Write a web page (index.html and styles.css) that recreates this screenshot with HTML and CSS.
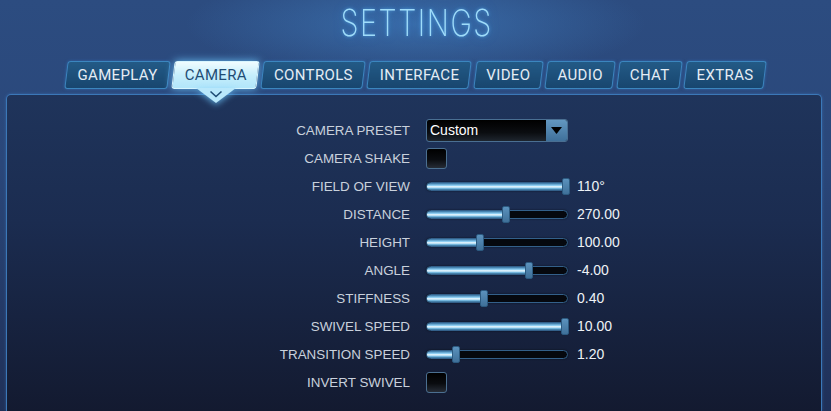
FILE: index.html
```html
<!DOCTYPE html>
<html>
<head>
<meta charset="utf-8">
<link rel="stylesheet" href="styles.css">
</head>
<body>
<div class="screen">
  <header class="head">
    <h1 class="title">SETTINGS</h1>
  </header>
  <nav class="tabs">
    <div class="tab"><span>GAMEPLAY</span></div>
    <div class="tab active"><span>CAMERA</span>
      <div class="pointer">
        <svg width="40" height="16" viewBox="0 0 40 16"><path d="M0 0 H40 L20 15 Z" fill="#b9e8fb"/><path d="M14.5 3.5 L20 8.5 L25.5 3.5" fill="none" stroke="#1f4c74" stroke-width="1.6"/></svg>
      </div>
    </div>
    <div class="tab"><span>CONTROLS</span></div>
    <div class="tab"><span>INTERFACE</span></div>
    <div class="tab"><span>VIDEO</span></div>
    <div class="tab"><span>AUDIO</span></div>
    <div class="tab"><span>CHAT</span></div>
    <div class="tab"><span>EXTRAS</span></div>
  </nav>
  <main class="panel">
    <div class="rows">
      <div class="row"><div class="label">CAMERA PRESET</div>
        <div class="select"><span class="sel-text">Custom</span><span class="sel-btn"><svg width="11" height="7" viewBox="0 0 11 7"><path d="M0 0 H11 L5.5 7 Z" fill="#000"/></svg></span></div>
      </div>
      <div class="row"><div class="label">CAMERA SHAKE</div><div class="check"></div></div>
      <div class="row"><div class="label">FIELD OF VIEW</div><div class="slider" style="--v:99%"><div class="fill"></div><div class="thumb"></div></div><div class="value">110°</div></div>
      <div class="row"><div class="label">DISTANCE</div><div class="slider" style="--v:56.5%"><div class="fill"></div><div class="thumb"></div></div><div class="value">270.00</div></div>
      <div class="row"><div class="label">HEIGHT</div><div class="slider" style="--v:37.5%"><div class="fill"></div><div class="thumb"></div></div><div class="value">100.00</div></div>
      <div class="row"><div class="label">ANGLE</div><div class="slider" style="--v:72.5%"><div class="fill"></div><div class="thumb"></div></div><div class="value">-4.00</div></div>
      <div class="row"><div class="label">STIFFNESS</div><div class="slider" style="--v:40.5%"><div class="fill"></div><div class="thumb"></div></div><div class="value">0.40</div></div>
      <div class="row"><div class="label">SWIVEL SPEED</div><div class="slider" style="--v:98.5%"><div class="fill"></div><div class="thumb"></div></div><div class="value">10.00</div></div>
      <div class="row"><div class="label">TRANSITION SPEED</div><div class="slider" style="--v:20.5%"><div class="fill"></div><div class="thumb"></div></div><div class="value">1.20</div></div>
      <div class="row"><div class="label">INVERT SWIVEL</div><div class="check"></div></div>
    </div>
  </main>
</div>
</body>
</html>
```
FILE: styles.css
```css
* { box-sizing: border-box; }
html, body { margin: 0; padding: 0; }
body {
  width: 831px; height: 411px; overflow: hidden;
  font-family: "Liberation Sans", Arial, sans-serif;
  background:
    radial-gradient(ellipse 230px 55px at 50% 24px, rgba(70,140,210,0.5), rgba(70,140,210,0) 100%),
    linear-gradient(to bottom, #2c4c80 0%, #2a477a 40%, #1f3058 100%);
}
.screen { display: flex; flex-direction: column; height: 411px; }
.head { height: 61px; display: flex; justify-content: center; }
.title {
  margin: 4px 0 0 3px; font-family: Inter, "DejaVu Sans", sans-serif; font-weight: 200;
  font-size: 37px; line-height: 37px; letter-spacing: 2px; color: #9fdcfa;
  transform: scaleX(0.78);
  text-shadow: 0 0 4px rgba(90,190,255,0.7), 0 0 12px rgba(60,150,240,0.4);
}
.tabs { display: flex; justify-content: center; gap: 4px; height: 28px; position: relative; z-index: 2; }
.tab {
  position: relative; height: 28px; padding: 0 11.5px;
  display: flex; align-items: center; justify-content: center;
  font-family: Roboto, "Liberation Sans", sans-serif; font-size: 15px; letter-spacing: 0.35px; color: #e4ecf4;
}
.tab::before {
  content: ""; position: absolute; inset: 0; transform: skewX(-7deg);
  background: linear-gradient(to bottom, #235a86, #18466f);
  border: 1px solid #3b86bf; border-radius: 3px;
  box-shadow: 0 0 3px rgba(60,140,220,0.5);
}
.tab span { position: relative; }
.tab.active { color: #1f4c74; }
.tab.active::before {
  background: linear-gradient(to bottom, #f0fcff, #c6eefc 50%, #b2e6fa);
  border-color: #d8f6ff;
  box-shadow: 0 0 8px rgba(110,200,255,0.9);
}
.pointer { position: absolute; left: 50%; top: 27px; margin-left: -20px; width: 40px; height: 16px; filter: drop-shadow(0 2px 3px rgba(110,200,255,0.7)); }
.pointer svg { display: block; }
.panel {
  margin: 5px 9px 0 6px; flex: 1;
  border: 1px solid #3b78b8; border-bottom: none; border-radius: 5px 5px 0 0;
  background: linear-gradient(to bottom, #1f345b 0%, #1b2c50 40%, #131a30 100%);
  box-shadow: 0 0 3px rgba(80,150,230,0.4);
}
.rows { padding-top: 21px; display: flex; flex-direction: column; }
.row { height: 28px; display: flex; align-items: center; }
.label {
  width: 403px; text-align: right; font-size: 13.4px; color: #c9d1dc;
  margin-right: 16px;
}
.select {
  width: 142px; height: 23px; display: flex; border: 1px solid #4a6f92; border-radius: 3px;
  background: linear-gradient(to bottom, #000 0%, #0b0d11 60%, #1e252e 100%); overflow: hidden;
}
.sel-text { flex: 1; color: #fff; font-size: 14px; line-height: 21px; padding-left: 3px; }
.sel-btn {
  width: 21px; display: flex; align-items: center; justify-content: center;
  background: linear-gradient(to bottom, #6397c0, #3f709a);
}
.sel-btn svg { display: block; margin-top: 1px; }
.check {
  width: 21px; height: 21px; border: 1px solid #4b6f90; border-radius: 3px;
  background: linear-gradient(to bottom, #000 0%, #0a0c10 55%, #262c36 100%);
}
.slider {
  position: relative; width: 142px; height: 9px; border-radius: 5px;
  background: #05080e; border: 1px solid #33608a;
  box-shadow: 0 0 2px rgba(0,0,0,0.6);
}
.fill {
  position: absolute; left: 0; top: 0; bottom: 0; width: var(--v); border-radius: 4px;
  background: linear-gradient(to bottom, #3471a0 0%, #8ccdf2 35%, #f2fbff 55%, #7fc2e8 75%, #2f6893 100%);
}
.thumb {
  position: absolute; top: -5px; left: var(--v); margin-left: -4px; width: 8px; height: 17px;
  border-radius: 2px; background: linear-gradient(to bottom, #5b92bd, #3f7099);
  border: 1px solid #2c5a80;
}
.value { margin-left: 9px; color: #eef2f6; font-size: 14px; }
```
